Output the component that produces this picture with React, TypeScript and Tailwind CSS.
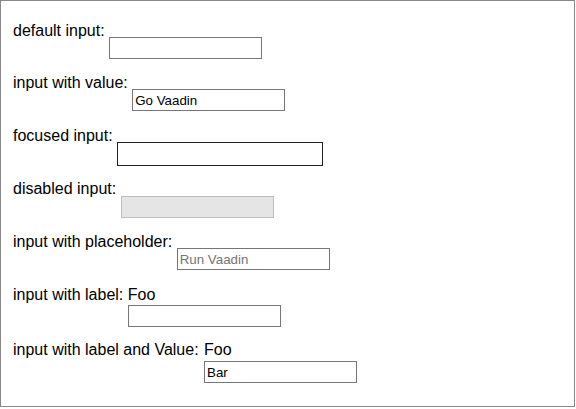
import React from "react";

const inputBase =
  "block box-border h-[22px] w-[153px] border border-solid border-[#767676] bg-white px-[2px] py-0 text-[13.33px] leading-normal text-black outline-none font-['Liberation_Sans',Arial,sans-serif]";

export default function App() {
  return (
    <div className="box-border h-[407px] w-[575px] border border-solid border-[#888888] bg-white pl-[12px] pt-[21px] font-['Liberation_Sans',Arial,sans-serif] text-[16px] leading-[18px] text-black">
      <div className="h-[52px] whitespace-nowrap">
        <span>default input:</span>{" "}
        <span className="mt-[15px] inline-block align-top">
          <input className={inputBase} readOnly />
        </span>
      </div>
      <div className="h-[53px] whitespace-nowrap">
        <span>input with value:</span>{" "}
        <span className="mt-[15px] inline-block align-top">
          <input className={inputBase} readOnly value="Go Vaadin" />
        </span>
      </div>
      <div className="h-[53px] whitespace-nowrap">
        <span>focused input:</span>{" "}
        <span className="mt-[15px] inline-block align-top">
          <input
            className="block box-border h-[24px] w-[206px] border border-solid border-[#222222] bg-white px-[2px] py-0 text-[13.33px] text-black outline-none font-['Liberation_Sans',Arial,sans-serif]"
            readOnly
          />
        </span>
      </div>
      <div className="h-[53px] whitespace-nowrap">
        <span>disabled input:</span>{" "}
        <span className="mt-[16px] inline-block align-top">
          <input
            className="block box-border h-[22px] w-[153px] border border-solid border-[#bdbdbd] bg-[#e5e5e5] px-[2px] py-0 text-[13.33px] text-black outline-none font-['Liberation_Sans',Arial,sans-serif]"
            disabled
          />
        </span>
      </div>
      <div className="h-[53px] whitespace-nowrap">
        <span>input with placeholder:</span>{" "}
        <span className="mt-[15px] inline-block align-top">
          <input
            className={inputBase + " placeholder:text-[#757575]"}
            readOnly
            placeholder="Run Vaadin"
          />
        </span>
      </div>
      <div className="h-[55px] whitespace-nowrap">
        <span>input with label:</span>{" "}
        <span className="inline-block align-top">
          <span className="block">Foo</span>
          <input className={inputBase + " mt-[1px]"} readOnly />
        </span>
      </div>
      <div className="whitespace-nowrap">
        <span>input with label and Value:</span>{" "}
        <span className="ml-[1px] inline-block align-top">
          <span className="block">Foo</span>
          <input className={inputBase + " mt-[2px]"} readOnly value="Bar" />
        </span>
      </div>
    </div>
  );
}
